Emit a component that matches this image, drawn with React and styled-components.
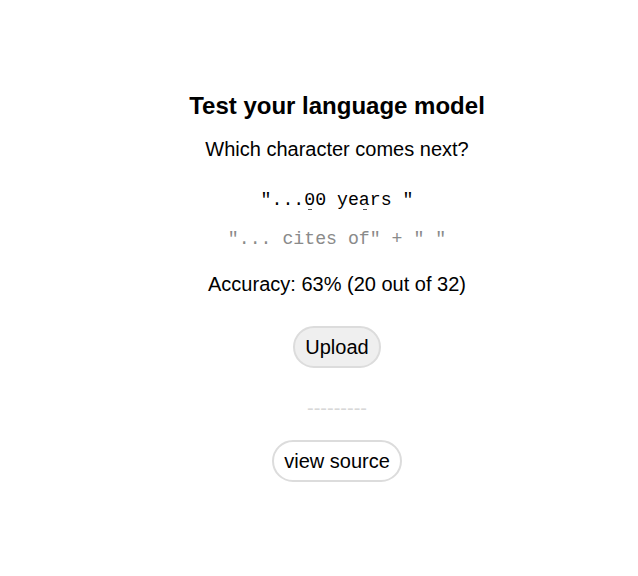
import styled, { createGlobalStyle } from "styled-components";

const GlobalStyle = createGlobalStyle`
  body {
    margin: 0;
    background: #fff;
    font-family: "Liberation Sans", Arial, sans-serif;
    color: #000;
  }
`;

const Page = styled.main`
  display: flex;
  flex-direction: column;
  align-items: center;
  padding: 92px 0 0 36px;
`;

const Title = styled.h1`
  margin: 0;
  font-size: 24px;
  font-weight: bold;
  line-height: 28px;
`;

const Prompt = styled.p`
  margin: 17px 0 0;
  font-size: 20px;
  line-height: 24px;
`;

const Snippet = styled.div`
  margin-top: ${({ $gap }) => $gap}px;
  font-family: "Liberation Mono", "Courier New", monospace;
  font-size: 18.2px;
  line-height: 22px;
  white-space: pre;
  color: ${({ $muted }) => ($muted ? "#8a8a8a" : "#000")};
`;

const Mark = styled.span`
  position: relative;

  &::after {
    content: "";
    position: absolute;
    left: 4px;
    bottom: 0;
    width: 4px;
    height: 1px;
    background: #555;
  }
`;

const Accuracy = styled.p`
  margin: 22px 0 0;
  font-size: 20px;
  line-height: 24px;
`;

const PillButton = styled.button`
  margin-top: ${({ $gap }) => $gap}px;
  height: 42px;
  padding: 0 10px;
  border: 2px solid #dcdcdc;
  border-radius: 21px;
  background: ${({ $plain }) => ($plain ? "#fff" : "#efefef")};
  font-family: "Liberation Sans", Arial, sans-serif;
  font-size: 20px;
  color: #000;
  cursor: pointer;
`;

const Divider = styled.div`
  margin-top: 30px;
  font-size: 20px;
  line-height: 20px;
  color: #d8d8d8;
`;

export default function App() {
  return (
    <>
      <GlobalStyle />
      <Page>
        <Title>Test your language model</Title>
        <Prompt>Which character comes next?</Prompt>
        <Snippet $gap={28}>
          "...<Mark>0</Mark>0 ye<Mark>a</Mark>rs "
        </Snippet>
        <Snippet $gap={17} $muted>
          "... cites of" + " "
        </Snippet>
        <Accuracy>Accuracy: 63% (20 out of 32)</Accuracy>
        <PillButton $gap={30}>Upload</PillButton>
        <Divider>---------</Divider>
        <PillButton $gap={22} $plain>view source</PillButton>
      </Page>
    </>
  );
}
